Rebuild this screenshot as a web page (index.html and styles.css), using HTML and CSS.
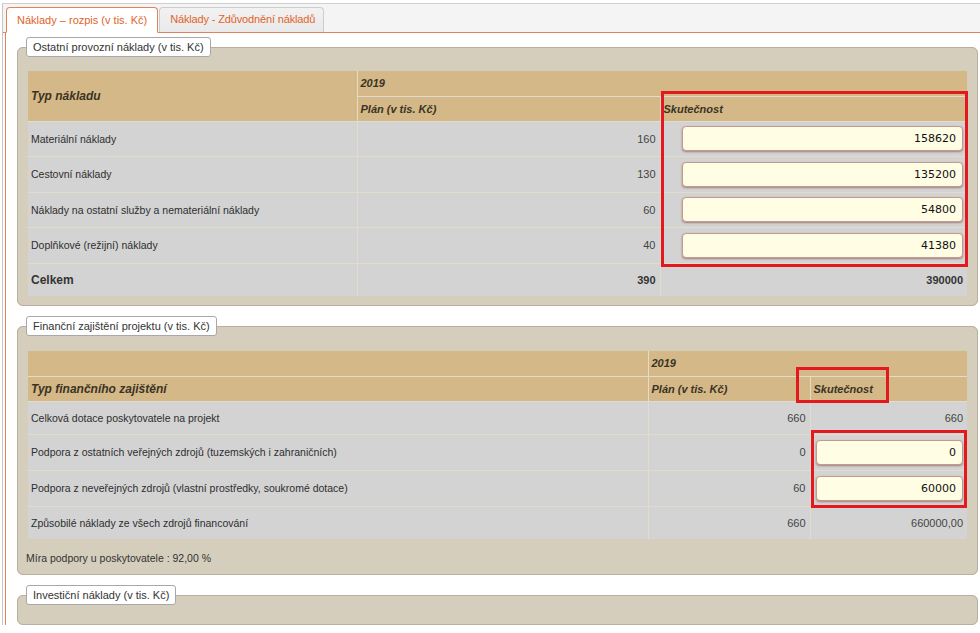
FILE: index.html
```html
<!DOCTYPE html>
<html lang="cs">
<head>
<meta charset="utf-8">
<title>Náklady – rozpis</title>
<link rel="stylesheet" href="styles.css">
</head>
<body>
<div class="tabs">
  <ul class="tab-nav">
    <li class="tab tab-active">Náklady – rozpis (v tis. Kč)</li>
    <li class="tab tab-second">Náklady - Zdůvodnění nákladů</li>
  </ul>
  <div class="panel">
    <fieldset class="box box-1">
      <legend>Ostatní provozní náklady (v tis. Kč)</legend>
      <table class="grid grid-1">
        <colgroup><col class="c1-a"><col class="c1-b"><col class="c1-c"></colgroup>
        <thead>
          <tr><th rowspan="2" class="th-main">Typ nákladu</th><th colspan="2">2019</th></tr>
          <tr><th>Plán (v tis. Kč)</th><th>Skutečnost</th></tr>
        </thead>
        <tbody>
          <tr><td>Materiální náklady</td><td class="num">160</td><td><input class="inp inp-wide" value="158620"></td></tr>
          <tr><td>Cestovní náklady</td><td class="num">130</td><td><input class="inp inp-wide" value="135200"></td></tr>
          <tr><td>Náklady na ostatní služby a nemateriální náklady</td><td class="num">60</td><td><input class="inp inp-wide" value="54800"></td></tr>
          <tr><td>Doplňkové (režijní) náklady</td><td class="num">40</td><td><input class="inp inp-wide" value="41380"></td></tr>
          <tr class="total"><td class="total-label">Celkem</td><td class="num">390</td><td class="num">390000</td></tr>
        </tbody>
      </table>
    </fieldset>

    <fieldset class="box box-2">
      <legend>Finanční zajištění projektu (v tis. Kč)</legend>
      <table class="grid grid-2">
        <colgroup><col class="c2-a"><col class="c2-b"><col class="c2-c"></colgroup>
        <thead>
          <tr><th></th><th colspan="2">2019</th></tr>
          <tr><th class="th-main">Typ finančního zajištění</th><th>Plán (v tis. Kč)</th><th>Skutečnost</th></tr>
        </thead>
        <tbody>
          <tr><td>Celková dotace poskytovatele na projekt</td><td class="num">660</td><td class="num">660</td></tr>
          <tr class="row-inp"><td>Podpora z ostatních veřejných zdrojů (tuzemských i zahraničních)</td><td class="num">0</td><td><input class="inp inp-narrow" value="0"></td></tr>
          <tr class="row-inp"><td>Podpora z neveřejných zdrojů (vlastní prostředky, soukromé dotace)</td><td class="num">60</td><td><input class="inp inp-narrow" value="60000"></td></tr>
          <tr><td>Způsobilé náklady ze všech zdrojů financování</td><td class="num">660</td><td class="num">660000,00</td></tr>
        </tbody>
      </table>
      <p class="rate">Míra podpory u poskytovatele : 92,00 %</p>
    </fieldset>

    <fieldset class="box box-3">
      <legend>Investiční náklady (v tis. Kč)</legend>
    </fieldset>
  </div>
</div>

<div class="mark mark-1"></div>
<div class="mark mark-2"></div>
<div class="mark mark-3"></div>
</body>
</html>
```

FILE: styles.css
```css
* { box-sizing: border-box; }

html, body { margin: 0; padding: 0; }

body {
  position: relative;
  background: #fff;
  color: #2e2e2e;
  font-family: "Liberation Sans", Arial, sans-serif;
  font-size: 11px;
}

/* tabs */
.tabs {
  margin: 3px 0 0 2px;
  border-top: 1px solid #cfcfcf;
  border-left: 1px solid #c6c6c6;
}

.tab-nav {
  display: flex;
  align-items: flex-start;
  list-style: none;
  margin: 0;
  padding: 3px 0 0 3px;
  height: 29px;
  background: #f4f4f4;
  border-bottom: 1px solid #e1825a;
}

.tab {
  height: 25px;
  margin-right: 1px;
  padding: 0 10px;
  line-height: 23px;
  border: 1px solid #cdcdcd;
  border-bottom: 0;
  border-radius: 4px 4px 0 0;
  background: linear-gradient(#f2f2f2, #e9e9e9);
  color: #e0642a;
  font-size: 11px;
  white-space: nowrap;
}

.tab-second { padding: 0 8px 0 10px; letter-spacing: -0.15px; }

.tab-active {
  height: 26px;
  line-height: 24px;
  border: 1px solid #e1825a;
  border-bottom: 1px solid #fff;
  background: #fff;
}

/* panel */
.panel {
  margin-left: 2px;
  border-left: 1px solid #e1825a;
  padding: 4px 2px 0 11px;
}

.box {
  margin: 0 0 10px;
  padding: 14px 10px 9px;
  min-width: 0;
  border: 1px solid #b8b09f;
  border-radius: 6px;
  background: #d6cebd;
}

.box-2 { padding-top: 15px; }

.box-3 {
  margin-bottom: 0;
  padding: 10px 10px 9px;
}

.box legend {
  margin-left: -2px;
  padding: 2px 6px;
  border: 1px solid #a8a8a8;
  border-radius: 3px;
  background: #fff;
  color: #333;
  font-size: 11px;
  line-height: 14px;
}

/* tables */
.grid {
  width: 100%;
  table-layout: fixed;
  border-collapse: collapse;
  border-style: hidden;
}

.c1-a { width: 329px; }
.c1-b { width: 303px; }
.c1-c { width: 307px; }

.c2-a { width: 620px; }
.c2-b { width: 162px; }
.c2-c { width: 157px; }

.grid th,
.grid td {
  border: 1px solid #e2dccd;
}

.grid th {
  height: 25px;
  padding: 0 3px;
  background: #d4b887;
  color: #3b3324;
  text-align: left;
  font-size: 11px;
  font-style: italic;
  font-weight: bold;
}

.grid th.th-main { font-size: 12px; }

.grid td {
  height: 33px;
  padding: 0 4px 0 3px;
  background: #d3d3d3;
  color: #2e2e2e;
  font-size: 10.5px;
  vertical-align: middle;
}

.grid-1 td { height: 35.5px; }
.grid-1 .total td { height: 33px; }
.grid-2 .row-inp td { height: 36px; }

.grid td.num {
  text-align: right;
  color: #444;
  font-size: 11px;
}

.total td { font-weight: bold; color: #333; }
.total td.num { color: #333; }
.grid td.total-label { font-size: 12px; }

.inp {
  display: block;
  height: 25px;
  margin-left: auto;
  padding: 0 6px;
  border: 1px solid #c39a90;
  border-radius: 4px;
  background: #fffde4;
  box-shadow: 0 1px 2px rgba(120, 45, 35, 0.5);
  color: #111;
  text-align: right;
  font-family: "DejaVu Sans", Verdana, sans-serif;
  font-size: 11px;
  outline: none;
}

.inp-wide { width: 281px; }
.inp-narrow { width: 147px; }

.rate {
  margin: 13px 0 0 -2px;
  color: #333;
  font-size: 10.5px;
  line-height: 13px;
}

/* red annotation frames laid over the form */
.mark {
  position: absolute;
  border: 3px solid #e3191f;
}

.mark-1 { left: 661px; top: 91px; width: 307px; height: 176px; }
.mark-2 { left: 796px; top: 367px; width: 93px; height: 36px; }
.mark-3 { left: 811px; top: 430px; width: 156px; height: 78px; }
```
